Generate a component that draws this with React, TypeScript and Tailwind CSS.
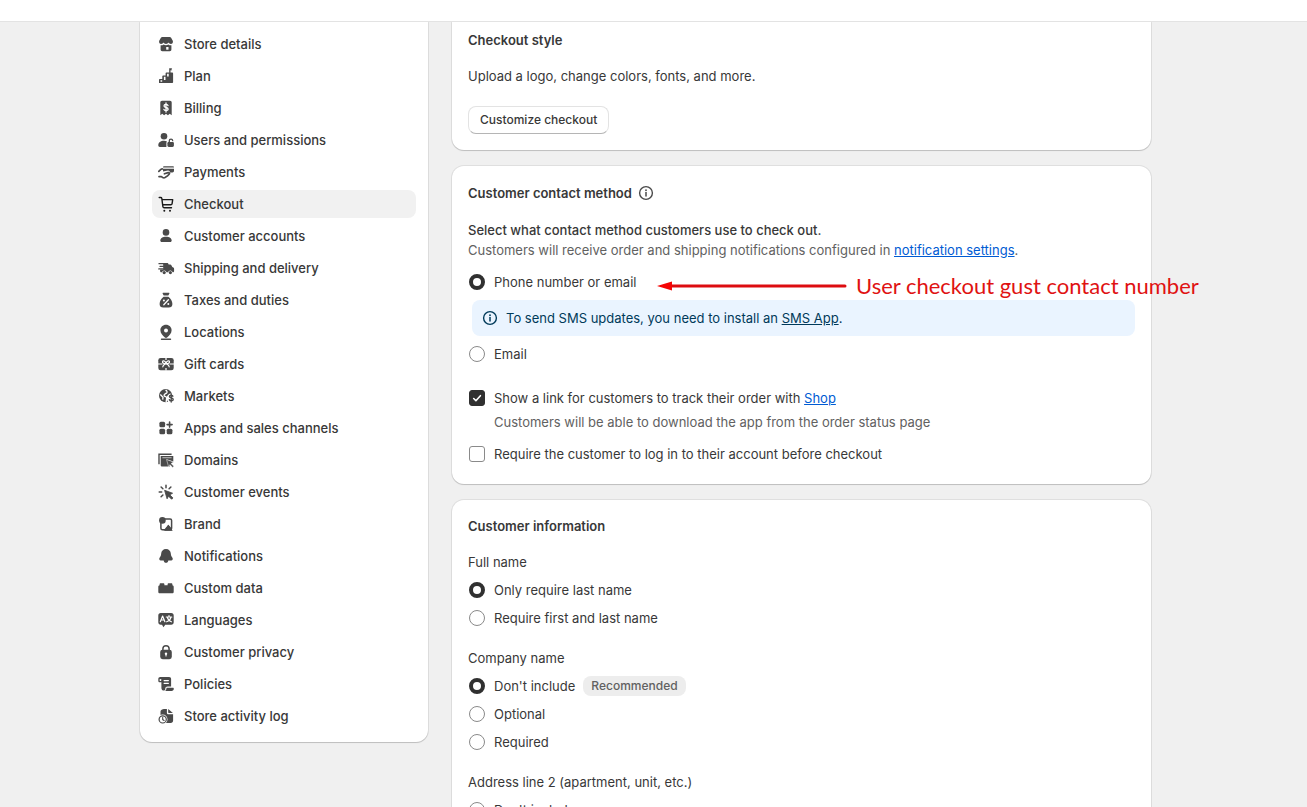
import type { ReactNode } from 'react';

const W = '#ffffff';
const cursor = 'M0 0l7.4 2.7-2.6 1.5 2.9 2.9-1.2 1.2-2.9-2.9-1.3 2.5z';

const icons: Record<string, ReactNode> = {
  store: (
    <>
      <path d="M6.3 3h7.4c.6 0 1.100.3 1.400.8L16.900 7c.3 2-.7 3-2 3-1.100 0-2-.6-2.400-1.400C12.100 9.400 11.100 10 10 10s-2.100-.6-2.500-1.400C7.100 9.400 6.200 10 5.100 10c-1.300 0-2.300-1-2-3l1.800-3.200c.3-.5.800-.8 1.400-.8z" />
      <path d="M4.600 11.300c1.200.2 2.200-.1 3-.8 1.500.9 3.300.9 4.800 0 .8.7 1.800 1 3 .8v4.200c0 1-.7 1.700-1.700 1.700H6.300c-1 0-1.700-.7-1.700-1.700z" />
      <path d="M10.200 13h2.300v2.700h-2.300z" fill={W} />
    </>
  ),
  plan: (
    <>
      <path d="M3 17v-3.2c0-.5.3-.8.8-.8h2.500v-2.700c0-.5.3-.8.8-.8h2.500V7.300c0-.5.3-.8.8-.8h2.800V2.300h3l-.8 1 .8 1h-1.700v2.200h1.500c.7 0 1.100.4 1.100 1.100v8.300c0 .7-.4 1.100-1.100 1.100z" />
      <path d="M4.500 14.200h1.700v1.500H4.500zM7.900 10.700h1.600v3.200H7.900zM11.100 7.800h1.600v2.800h-1.600z" fill={W} />
    </>
  ),
  billing: (
    <>
      <path d="M6 2.800h8c1 0 1.700.7 1.700 1.700v12.700l-2-1.500-1.800 1.500-1.900-1.500-1.900 1.500-1.800-1.500-2 1.500V4.500c0-1 .7-1.700 1.700-1.700z" />
      <path d="M12 7.600c-.2-.8-1-1.200-2-1.200-1.200 0-2 .6-2 1.500 0 2.200 4.100 1 4.100 3.200 0 .9-.9 1.500-2.100 1.500-1 0-1.900-.5-2.100-1.300M10 5v9" fill="none" stroke={W} strokeWidth="1.300" strokeLinecap="round" />
    </>
  ),
  users: (
    <>
      <circle cx="8" cy="6.300" r="3.300" />
      <path d="M2.300 15.200c0-2.700 2.400-4.400 5.700-4.400 1.200 0 2.200.2 3 .6-.4.5-.6 1-.6 1.600v3.900H3.800c-.9 0-1.500-.7-1.500-1.700z" />
      <path d="M12.800 12h3.700c.8 0 1.400.5 1.400 1.300v2.300c0 .8-.6 1.400-1.400 1.400h-3.700c-.8 0-1.400-.6-1.400-1.400v-2.300c0-.8.6-1.300 1.400-1.300z" />
      <path d="M13.300 12.500v-1.700c0-.9.7-1.600 1.700-1.600.9 0 1.600.6 1.700 1.500" fill="none" stroke="currentColor" strokeWidth="1.300" strokeLinecap="round" />
    </>
  ),
  payments: (
    <>
      <path d="M8.300 4.300h8.400c.8 0 1.300.5 1.300 1.200H7c0-.7.5-1.200 1.300-1.200zM7 6.700h11v2c0 1-.6 1.700-1.600 1.700h-2.600c.2-1.300-.7-2.100-1.900-1.900l-4.900.9z" />
      <path d="M2.800 9.400l2.100-2c.4-.3.900-.5 1.400-.5M3 14.600h2.400l1.300.9c.7.400 1.500.5 2.300.1 1.500-.8 3.300-2.100 4.300-3.500.6-.8-.1-1.800-1.100-1.500l-3.800 1.200" fill="none" stroke="currentColor" strokeWidth="1.700" strokeLinecap="round" strokeLinejoin="round" />
    </>
  ),
  cart: (
    <>
      <path d="M3.200 3.500h1.500c.6 0 1 .4 1.100.9l1.100 8.200c.1.600.6 1.100 1.200 1.100h7.400M6 5.600h10.700l-.6 4.100c-.1.700-.6 1.100-1.300 1.100H6.700" fill="none" stroke="currentColor" strokeWidth="1.400" strokeLinecap="round" strokeLinejoin="round" />
      <circle cx="8.300" cy="16.700" r="1" />
      <circle cx="14" cy="16.700" r="1" />
    </>
  ),
  person: (
    <>
      <circle cx="10" cy="6.400" r="3.300" />
      <path d="M4.300 14.500c0-2.200 2.500-3.700 5.700-3.700s5.700 1.500 5.700 3.700c0 .9-.6 1.500-1.400 1.500H5.700c-.8 0-1.400-.6-1.400-1.500z" />
    </>
  ),
  truck: (
    <>
      <path d="M7 5h4c1 0 1.600.6 1.600 1.600h1.600c.6 0 1 .3 1.300.8l.8 1.700 1 .5c.6.3.8.7.8 1.300v2c0 .8-.5 1.300-1.300 1.300h-.2a2.300 2.300 0 0 0-4.500 0h-1.600a2.300 2.300 0 0 0-4.500 0h-.6c-.8 0-1.300-.5-1.300-1.300v-1.400h3.100V7z" />
      <path d="M3 5.700h5M4 8.300h4.600M2.800 10.900h4.500" fill="none" stroke="currentColor" strokeWidth="1.300" strokeLinecap="round" />
      <circle cx="8.200" cy="14.600" r="1.600" />
      <circle cx="14.400" cy="14.600" r="1.600" />
    </>
  ),
  tax: (
    <>
      <path d="M7.300 2.700h5.400c.6 0 .9.600.6 1.100l-1 1.700H7.700l-1-1.700c-.3-.5 0-1.100.6-1.100z" />
      <path d="M7.600 6.700h4.800c2.300 1.600 4 4.500 4 7.300 0 2.300-1.300 3.600-3.700 3.600H7.300c-2.400 0-3.700-1.300-3.700-3.600 0-2.800 1.700-5.700 4-7.300z" />
      <path d="M12.400 9.800l-4.600 4.900" fill="none" stroke={W} strokeWidth="1.300" strokeLinecap="round" />
      <circle cx="7.900" cy="10.500" r="1" fill={W} />
      <circle cx="12.300" cy="14.100" r="1" fill={W} />
    </>
  ),
  pin: (
    <>
      <path d="M10 2.800c3.200 0 5.600 2.400 5.600 5.500 0 3.300-2.300 5.200-4.500 7.300-.6.600-1.600.6-2.200 0-2.200-2.100-4.500-4-4.500-7.300 0-3.100 2.400-5.500 5.600-5.500z" />
      <circle cx="10" cy="8.500" r="2" fill={W} />
      <path d="M5.500 17.200h9" stroke="currentColor" strokeWidth="1.400" strokeLinecap="round" />
    </>
  ),
  gift: (
    <>
      <rect x="2.300" y="4" width="15.400" height="12.300" rx="2.300" />
      <path d="M2 10h4.500M13.500 10H18M10 4v2M10 14v2.500" stroke={W} strokeWidth="1.200" />
      <path d="M9.800 9.800C8 9.800 6.200 9 6.500 7.700c.4-1.600 3-.8 3.500 1.600.5-2.400 3.100-3.200 3.500-1.600.3 1.300-1.500 2.100-3.300 2.100 1.600.7 3 1.700 3 3M9.800 9.800c-1.600.7-3 1.700-3 3" fill="none" stroke={W} strokeWidth="1.200" strokeLinecap="round" />
    </>
  ),
  markets: (
    <>
      <circle cx="9.600" cy="9.700" r="6.600" />
      <path d="M9.500 4.200c1.300.6 1.900 1.400 1.400 2.400-.6 1.100-2.100 1-2.700 2.200-.4 1 .4 1.600 1.400 1.800.9.200 1.200.7 1 1.700l-.5 4.300M4.300 8.500l2.700 2.700-.3 2.400" fill="none" stroke={W} strokeWidth="1.300" />
      <circle cx="15.200" cy="12.200" r="4.600" fill={W} />
      <path d="M16.900 10.200c-.2-.7-.9-1.100-1.700-1.100-1 0-1.800.5-1.800 1.400 0 2.100 3.800 1 3.800 2.900 0 .9-.9 1.400-1.900 1.400-1 0-1.700-.4-1.900-1.100M15.200 7.900v8.200" fill="none" stroke="currentColor" strokeWidth="1.400" strokeLinecap="round" />
    </>
  ),
  apps: (
    <>
      <rect x="3.400" y="3.800" width="5.700" height="5.500" rx="1.500" />
      <rect x="3.400" y="10.800" width="5.700" height="5.500" rx="1.500" />
      <rect x="10.700" y="10.800" width="5.700" height="5.500" rx="1.500" />
      <path d="M13.600 4.100v5M11.100 6.600h5" stroke="currentColor" strokeWidth="1.600" strokeLinecap="round" />
    </>
  ),
  domains: (
    <>
      <path d="M3 14.300V4.300h12.600" fill="none" stroke="currentColor" strokeWidth="1.400" />
      <path d="M4.700 5.900h12.600v5.500l-6.300-2 3 7.200H6.300c-1 0-1.600-.6-1.600-1.600z" />
      <path d="M6.400 7.700h9.200" stroke="#b5b5b5" strokeWidth="1.100" />
      <path d={cursor} transform="translate(10.500 9.500) scale(.96)" stroke={W} strokeWidth=".5" />
    </>
  ),
  events: (
    <>
      <path d="M10 3.300v2.400M5.100 5l1.800 1.800M14.900 5l-1.800 1.800M3.200 9.900h2.500M5.100 14.800l1.800-1.800" fill="none" stroke="currentColor" strokeWidth="1.500" strokeLinecap="round" />
      <path d={cursor} transform="translate(8.600 8.300) scale(1.080)" stroke="currentColor" strokeWidth=".8" strokeLinejoin="round" />
    </>
  ),
  brand: (
    <>
      <rect x="4.900" y="5" width="10.700" height="10.800" rx="1.500" fill="none" stroke="currentColor" strokeWidth="1.500" />
      <circle cx="6.400" cy="6.400" r="3.300" />
      <path d="M7.500 16.500l4.800-5.800 4.200 5.800z" />
      <path d="M8.500 16.800h8l-1.700-3.400-2.500-2.600z" />
    </>
  ),
  bell: (
    <path d="M10 2.900c-2.900 0-4.700 2.100-4.800 4.700-.1 2-.7 3-1.600 4.100-.9 1.100-.2 2.700 1.200 2.700h2.900c.2 1.400 1 2.400 2.300 2.400s2.100-1 2.300-2.400h2.900c1.400 0 2.100-1.600 1.200-2.700-.9-1.100-1.500-2.100-1.600-4.100-.1-2.600-1.900-4.700-4.800-4.700z" />
  ),
  brick: (
    <path d="M4.700 5.200h2.600c.7 0 1.100.4 1.100 1.100v1h3.200v-1c0-.7.4-1.100 1.100-1.100h2.600c.7 0 1.100.4 1.100 1.100v1c.8.1 1.300.6 1.300 1.500v5c0 1-.6 1.500-1.500 1.500H3.800c-.9 0-1.500-.5-1.500-1.500v-5c0-.9.5-1.400 1.300-1.500v-1c0-.7.4-1.100 1.100-1.100z" />
  ),
  language: (
    <>
      <path d="M4.800 3h10.400c1.600 0 2.500.9 2.500 2.500v6.800c0 1.600-.9 2.500-2.500 2.500h-6L7.500 17.300l-1.500-2.500H4.800c-1.600 0-2.500-.9-2.500-2.500V5.500C2.300 3.900 3.200 3 4.800 3z" />
      <path d="M4.300 11.700l2.300-5.600 2.300 5.600M5.100 10h3M10.300 7h5.500M13 5.500V7M11.300 7.200c.5 2.200 2 3.800 4.100 4.600M15 7.200c-.5 2.200-2.200 3.900-4.300 4.600" fill="none" stroke={W} strokeWidth="1.200" strokeLinecap="round" strokeLinejoin="round" />
    </>
  ),
  lock: (
    <>
      <path d="M6.900 8.500V6.800c0-1.900 1.200-3.100 3.100-3.100s3.100 1.200 3.100 3.100v1.700" fill="none" stroke="currentColor" strokeWidth="1.500" />
      <rect x="4.200" y="7.700" width="11.600" height="9.500" rx="2.400" />
      <circle cx="10" cy="11.700" r="1.200" fill={W} />
      <path d="M10 12v2" stroke={W} strokeWidth="1.100" strokeLinecap="round" />
    </>
  ),
  policies: (
    <>
      <path d="M4.300 3h8.800c1.300 0 2 .7 2 2v7.500h-3.300c-1.900 0-2.800 1.300-2.500 3-.2.700-.7 1-1.300 1-1.500 0-2.600-.9-2.600-2.600V8.300H3.900c-1 0-1.600-.6-1.600-1.600V5c0-1.200.8-2 2-2z" />
      <path d="M10.500 13.700h6.300c.7 0 1 .4 1 1 0 1.400-.9 2.200-2.200 2.200H9c1-.7 1.500-1.600 1.500-3.200z" />
      <path d="M3.700 6.900V5.400c0-.7 1.500-.7 1.500 0v1.500z" fill={W} />
      <path d="M8.100 6.600h4.300M8.100 9.300h4.300" stroke={W} strokeWidth="1.200" strokeLinecap="round" />
    </>
  ),
  activity: (
    <>
      <path d="M8 3h2.900v3.700c0 1 .6 1.600 1.600 1.600h4.600v6.200c0 1.500-.9 2.400-2.400 2.400H8c1.500-3.500-.4-7-3.500-7.300V5.400C4.500 3.900 6.500 3 8 3z" />
      <path d="M12.200 3.100l4.700 4h-3.800c-.6 0-.9-.3-.9-.9z" />
      <circle cx="6.700" cy="13.400" r="4.800" fill={W} />
      <circle cx="6.700" cy="13.400" r="3.600" fill="none" stroke="currentColor" strokeWidth="1.200" />
      <path d="M6.700 11.400v2.200l1.400.8" fill="none" stroke="currentColor" strokeWidth="1.100" strokeLinecap="round" />
    </>
  ),
};

const nav: [string, string][] = [
  ['store', 'Store details'],
  ['plan', 'Plan'],
  ['billing', 'Billing'],
  ['users', 'Users and permissions'],
  ['payments', 'Payments'],
  ['cart', 'Checkout'],
  ['person', 'Customer accounts'],
  ['truck', 'Shipping and delivery'],
  ['tax', 'Taxes and duties'],
  ['pin', 'Locations'],
  ['gift', 'Gift cards'],
  ['markets', 'Markets'],
  ['apps', 'Apps and sales channels'],
  ['domains', 'Domains'],
  ['events', 'Customer events'],
  ['brand', 'Brand'],
  ['bell', 'Notifications'],
  ['brick', 'Custom data'],
  ['language', 'Languages'],
  ['lock', 'Customer privacy'],
  ['policies', 'Policies'],
  ['activity', 'Store activity log'],
];

function InfoIcon() {
  return (
    <svg viewBox="0 0 20 20" className="size-5 shrink-0" fill="none" stroke="currentColor" strokeLinecap="round" aria-hidden="true">
      <circle cx="10" cy="10" r="6.400" strokeWidth="1.400" />
      <path d="M10 9.600v3.400" strokeWidth="1.500" />
      <circle cx="10" cy="7.200" r=".9" fill="currentColor" stroke="none" />
    </svg>
  );
}

function Card({ children, first = false }: { children: ReactNode; first?: boolean }) {
  return (
    <section
      className={
        first
          ? 'rounded-b-xl bg-white px-4 pb-4 pt-2 shadow-[0_1px_1px_rgba(0,0,0,0.15),0_0_0_1px_rgba(0,0,0,0.07)]'
          : 'rounded-xl bg-white p-4 shadow-[0_1px_1px_rgba(0,0,0,0.15),0_0_0_1px_rgba(0,0,0,0.07)]'
      }
    >
      {children}
    </section>
  );
}

function Radio({ name, label, checked = false, badge }: { name: string; label: string; checked?: boolean; badge?: string }) {
  return (
    <label className="flex h-7 items-center gap-2">
      <span className="flex w-[18px] shrink-0 justify-center">
        <input
          type="radio"
          name={name}
          defaultChecked={checked}
          className="size-4 appearance-none rounded-full border border-[#8a8a8a] bg-white checked:border-[4px] checked:border-[#303030]"
        />
      </span>
      <span>{label}</span>
      {badge && <span className="rounded-lg bg-[#ededed] px-2 text-xs font-medium leading-5 text-[#616161]">{badge}</span>}
    </label>
  );
}

function Check({ id, children, checked = false }: { id: string; children: ReactNode; checked?: boolean }) {
  return (
    <div className="flex h-7 items-center gap-2">
      <span className="grid w-[18px] shrink-0 place-items-center">
        <input
          id={id}
          type="checkbox"
          defaultChecked={checked}
          className="peer col-start-1 row-start-1 size-4 appearance-none rounded-[3px] border border-[#8a8a8a] bg-white checked:border-[#303030] checked:bg-[#303030]"
        />
        <svg viewBox="0 0 16 16" className="pointer-events-none col-start-1 row-start-1 hidden size-4 peer-checked:block" fill="none" stroke="white" strokeWidth="1.600" strokeLinecap="round" strokeLinejoin="round" aria-hidden="true">
          <path d="M4.700 8.500l2.200 2.200 4.500-5" />
        </svg>
      </span>
      <label htmlFor={id}>{children}</label>
    </div>
  );
}

export default function App() {
  return (
    <div className="flex h-screen flex-col overflow-hidden bg-[#f0f0f0] font-['Inter',sans-serif] text-[13px] leading-5 text-[#383838]">
      <header className="h-[22px] shrink-0 border-b border-[#e3e3e3] bg-white" />
      <main className="min-h-0 flex-1 overflow-y-auto pr-4 [scrollbar-width:none]">
        <div className="mx-auto flex max-w-[1011px] items-start gap-6">
          <nav aria-label="Settings" className="w-[288px] shrink-0 rounded-b-xl bg-white px-3 pb-3 pt-2 shadow-[0_1px_1px_rgba(0,0,0,0.15),0_0_0_1px_rgba(0,0,0,0.07)]">
            <ul className="flex flex-col gap-1">
              {nav.map(([icon, label]) => (
                <li key={label}>
                  <a
                    href="#"
                    aria-current={icon === 'cart' ? 'page' : undefined}
                    className="flex h-7 items-center gap-2 rounded-lg px-1 font-medium aria-[current=page]:bg-[#f1f1f1]"
                  >
                    <svg viewBox="0 0 20 20" className={icon === 'cart' ? 'size-5 shrink-0 text-[#1a1a1a]' : 'size-5 shrink-0 text-[#4a4a4a]'} fill="currentColor" aria-hidden="true">
                      {icons[icon]}
                    </svg>
                    <span>{label}</span>
                  </a>
                </li>
              ))}
            </ul>
          </nav>

          <div className="flex min-w-0 flex-1 flex-col gap-4">
            <Card first>
              <h2 className="font-semibold">Checkout style</h2>
              <p className="mt-4">Upload a logo, change colors, fonts, and more.</p>
              <button
                type="button"
                className="mt-5 block h-7 rounded-lg border border-[#e3e3e3] border-b-[#b5b5b5] bg-white px-[11px] text-xs font-medium"
              >
                Customize checkout
              </button>
            </Card>

            <Card>
              <div className="flex h-[22px] items-center gap-1">
                <h2 className="font-semibold">Customer contact method</h2>
                <button type="button" aria-label="About contact methods" className="text-[#4a4a4a]">
                  <InfoIcon />
                </button>
              </div>
              <p className="mt-4 font-medium">Select what contact method customers use to check out.</p>
              <p className="text-[#616161]">
                Customers will receive order and shipping notifications configured in{' '}
                <a href="#" className="text-[#005bd3] underline">notification settings</a>.
              </p>
              <div className="relative mt-2">
                <Radio name="contact" label="Phone number or email" checked />
                <div className="absolute left-[189px] top-1 flex h-7 items-center gap-[9px] whitespace-nowrap font-['Lato',sans-serif] text-[22px] text-[#e01212]">
                  <svg viewBox="0 0 190 12" className="h-3 w-[190px]" aria-hidden="true">
                    <path d="M12 6H188" stroke="#dd0c10" strokeWidth="3" strokeLinecap="round" />
                    <path d="M0 6L15 1.500V10.500Z" fill="#f50505" />
                  </svg>
                  <span>User checkout gust contact number</span>
                </div>
              </div>
              <div className="my-1 ml-1 flex items-center gap-1.5 rounded-lg bg-[#eaf4ff] px-2 py-2 text-[#003a5a]">
                <InfoIcon />
                <p>
                  To send SMS updates, you need to install an <a href="#" className="underline">SMS App</a>.
                </p>
              </div>
              <Radio name="contact" label="Email" />
              <div className="mt-4">
                <Check id="track" checked>
                  Show a link for customers to track their order with <a href="#" className="text-[#005bd3] underline">Shop</a>
                </Check>
                <p className="mb-2 pl-[26px] text-[#616161]">Customers will be able to download the app from the order status page</p>
                <Check id="login">Require the customer to log in to their account before checkout</Check>
              </div>
            </Card>

            <Card>
              <h2 className="font-semibold">Customer information</h2>
              <fieldset className="mt-4">
                <legend className="mb-1">Full name</legend>
                <Radio name="fullname" label="Only require last name" checked />
                <Radio name="fullname" label="Require first and last name" />
              </fieldset>
              <fieldset className="mt-4">
                <legend className="mb-1">Company name</legend>
                <Radio name="company" label="Don't include" checked badge="Recommended" />
                <Radio name="company" label="Optional" />
                <Radio name="company" label="Required" />
              </fieldset>
              <fieldset className="mt-4">
                <legend className="mb-1">Address line 2 (apartment, unit, etc.)</legend>
                <Radio name="address" label="Don't include" />
              </fieldset>
            </Card>
          </div>
        </div>
      </main>
    </div>
  );
}
